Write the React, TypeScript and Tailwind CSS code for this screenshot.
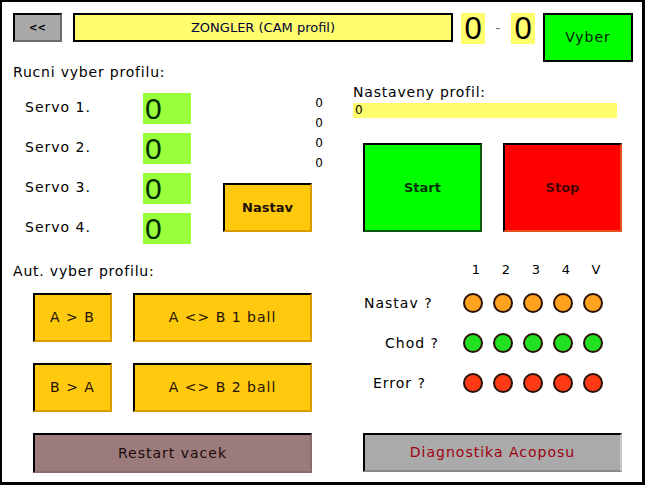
import React from 'react';

const font = { fontFamily: '"DejaVu Sans", "Liberation Sans", sans-serif' };
const digitFont = { fontFamily: '"Liberation Sans", sans-serif' };

// 3D-ish panel button: black top/left edge, softer bottom/right
const Btn: React.FC<{ className: string; children: React.ReactNode }> = ({ className, children }) => (
  <div
    className={`box-border flex items-center justify-center border-2 border-t-black border-l-black ${className}`}
  >
    {children}
  </div>
);

const servos = ['Servo 1.', 'Servo 2.', 'Servo 3.', 'Servo 4.'];

const statusRows = [
  { label: 'Nastav ?', pad: 'pl-[11px]', color: 'bg-[#ffa31f]' },
  { label: 'Chod ?', pad: 'pl-[32px]', color: 'bg-[#22e022]' },
  { label: 'Error ?', pad: 'pl-[20px]', color: 'bg-[#ff3a14]' },
];

const yellowBtn = 'border-b-[#d89c00] border-r-[#d89c00] bg-[#ffc90e] text-[#221100] text-[14px] tracking-[1px]';

export default function App() {
  return (
    <div
      style={font}
      className="box-border h-[485px] w-[645px] overflow-hidden border-b-[3px] border-l-2 border-r-[3px] border-t-2 border-black bg-white text-black"
    >
      {/* header */}
      <div className="flex items-start pl-[11px] pt-[11px]">
        <Btn className="h-[29px] w-[49px] border-b-[#6a6a6a] border-r-[#6a6a6a] bg-[#a9a9a9] text-[10px] font-bold">
          &lt;&lt;
        </Btn>
        <div className="ml-[11px] box-border flex h-[29px] w-[380px] items-center justify-center border-2 border-black bg-[#ffff6e] text-[13px] text-[#000038]">
          ZONGLER (CAM profil)
        </div>
        <div
          style={digitFont}
          className="ml-[8px] flex h-[31px] w-[24px] items-center justify-center bg-[#ffff6e] text-[31px] leading-none"
        >
          0
        </div>
        <div className="flex h-[31px] w-[26px] items-center justify-center text-[14px] text-[#777]">-</div>
        <div
          style={digitFont}
          className="flex h-[31px] w-[24px] items-center justify-center bg-[#ffff6e] text-[31px] leading-none"
        >
          0
        </div>
        <div className="ml-[8px] box-border flex h-[49px] w-[90px] items-center justify-center border-2 border-black bg-[#00ff00] text-[14px] tracking-[1px] text-[#002200]">
          Vyber
        </div>
      </div>

      <div className="flex">
        {/* left column */}
        <div className="w-[338px] pl-[11px]">
          <p className="mt-[2px] text-[14px] leading-[16px] tracking-[0.8px]">Rucni vyber profilu:</p>

          <div className="mt-[13px] flex items-start">
            <div className="ml-[12px] flex flex-col gap-[9px]">
              {servos.map((s) => (
                <div key={s} className="flex h-[31px] items-center">
                  <span className="w-[118px] pb-[3px] text-[14px] tracking-[1px]">{s}</span>
                  <div
                    style={digitFont}
                    className="flex h-[31px] w-[48px] items-center bg-[#99ff3a] pl-[2px] text-[30px] leading-none text-[#002a00]"
                  >
                    0
                  </div>
                </div>
              ))}
            </div>
            <div className="ml-[32px] flex w-[100px] flex-col">
              <div className="flex flex-col self-end text-[12px] leading-[20px]">
                <span>0</span>
                <span>0</span>
                <span>0</span>
                <span>0</span>
              </div>
              <Btn className="mt-[10px] h-[49px] w-[89px] border-b-[#d89c00] border-r-[#d89c00] bg-[#ffc90e] text-[13px] font-bold text-[#221100]">
                Nastav
              </Btn>
            </div>
          </div>

          <p className="mt-[19px] text-[14px] leading-[16px] tracking-[0.8px]">Aut. vyber profilu:</p>

          <div className="mt-[14px] flex flex-col gap-[21px] pl-[20px]">
            <div className="flex gap-[21px]">
              <Btn className={`h-[49px] w-[79px] ${yellowBtn}`}>A &gt; B</Btn>
              <Btn className={`h-[49px] w-[179px] ${yellowBtn}`}>A &lt;&gt; B 1 ball</Btn>
            </div>
            <div className="flex gap-[21px]">
              <Btn className={`h-[49px] w-[79px] ${yellowBtn}`}>B &gt; A</Btn>
              <Btn className={`h-[49px] w-[179px] ${yellowBtn}`}>A &lt;&gt; B 2 ball</Btn>
            </div>
            <Btn className="h-[40px] w-[279px] border-b-[#8a6c6c] border-l-[#555] border-r-[#8a6c6c] bg-[#9b7b7b] text-[14px] tracking-[1px] text-[#1a0a0a]">
              Restart vacek
            </Btn>
          </div>
        </div>

        {/* right column */}
        <div className="ml-[13px] w-[270px]">
          <p className="mt-[22px] text-[14px] leading-[16px] tracking-[0.8px]">Nastaveny profil:</p>
          <div className="mt-[3px] h-[15px] w-[264px] bg-[#ffff6e] pl-[2px] text-[12px] leading-[15px]">0</div>

          <div className="ml-[10px] mt-[25px] flex gap-[21px]">
            <div className="box-border flex h-[89px] w-[119px] items-center justify-center border-2 border-black border-b-[#0a5a0a] border-r-[#0a5a0a] bg-[#00ff00] text-[13px] font-bold text-[#003300]">
              Start
            </div>
            <div className="box-border flex h-[89px] w-[119px] items-center justify-center border-2 border-black border-b-[#e8501e] border-r-[#e8501e] bg-[#ff0000] text-[13px] font-bold text-[#4a0000]">
              Stop
            </div>
          </div>

          <div className="mt-[30px] flex pl-[108px] text-[13px] leading-[16px]">
            {['1', '2', '3', '4', 'V'].map((h) => (
              <span key={h} className="w-[30px] text-center">
                {h}
              </span>
            ))}
          </div>

          <div className="mt-[15px] flex flex-col gap-[20px]">
            {statusRows.map((row) => (
              <div key={row.label} className="flex h-[20px] items-center">
                <span className={`w-[110px] text-[14px] tracking-[1px] ${row.pad}`}>{row.label}</span>
                <div className="flex gap-[10px]">
                  {[0, 1, 2, 3, 4].map((i) => (
                    <span
                      key={i}
                      className={`box-border h-[20px] w-[20px] rounded-full border-2 border-[#2a1000] ${row.color}`}
                    />
                  ))}
                </div>
              </div>
            ))}
          </div>

          <div className="ml-[10px] mt-[40px] box-border flex h-[39px] w-[259px] items-center justify-center border-2 border-black border-b-[#8a8a8a] border-r-[#c8c8c8] bg-[#aaaaaa] text-[14px] tracking-[1px] text-[#a00010]">
            Diagnostika Acoposu
          </div>
        </div>
      </div>
    </div>
  );
}
